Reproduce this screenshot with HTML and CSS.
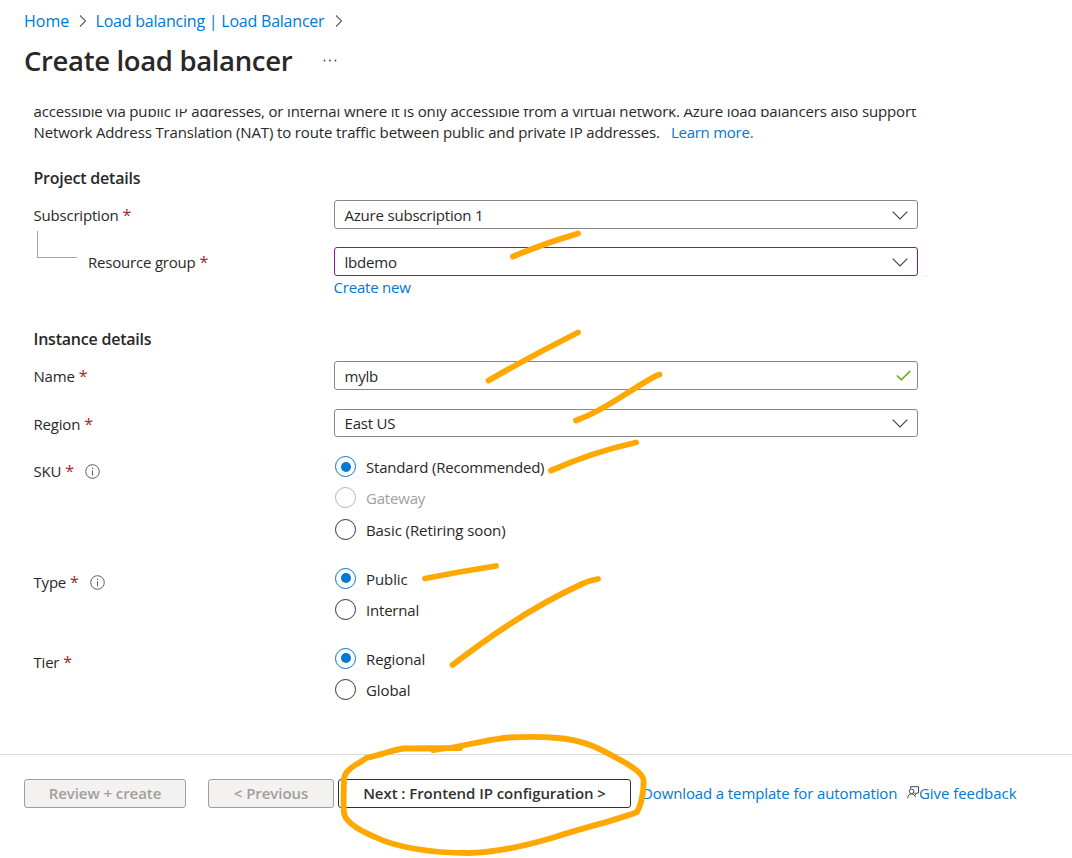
FILE: index.html
```html
<!DOCTYPE html>
<html lang="en">
<head>
<meta charset="utf-8">
<title>Create load balancer</title>
<link rel="stylesheet" href="styles.css">
</head>
<body>
<div class="page">
  <header class="header">
    <nav class="breadcrumb">
      <a class="link crumb-home">Home</a>
      <svg class="crumb-arrow" viewBox="0 0 8 14"><path d="M1 1.500 6.500 7 1 12.500"/></svg>
      <a class="link crumb-lb">Load balancing | Load Balancer</a>
      <svg class="crumb-arrow" viewBox="0 0 8 14"><path d="M1 1.500 6.500 7 1 12.500"/></svg>
    </nav>
    <div class="title-row">
      <h1 class="title">Create load balancer</h1>
      <svg class="more" viewBox="0 0 15 3"><circle cx="1.500" cy="1.500" r=".9"/><circle cx="7" cy="1.500" r=".9"/><circle cx="12.500" cy="1.500" r=".9"/></svg>
    </div>
  </header>

  <main class="content">
    <div class="intro">
      <p class="intro-line">accessible via public IP addresses, or internal where it is only accessible from a virtual network. Azure load balancers also support</p>
      <p class="intro-line"><span>Network Address Translation (NAT) to route traffic between public and private IP addresses.</span><a class="link learn">Learn more.</a></p>
    </div>

    <h2 class="section">Project details</h2>
    <div class="row">
      <div class="label"><span>Subscription</span><i class="req">*</i></div>
      <div class="field"><span>Azure subscription 1</span><svg class="chev" viewBox="0 0 16 9"><path d="M.7.700 8 8 15.300.700"/></svg></div>
    </div>
    <div class="row row-group">
      <div class="label"><span class="elbow"></span><span>Resource group</span><i class="req">*</i></div>
      <div class="field edited"><span>lbdemo</span><svg class="chev" viewBox="0 0 16 9"><path d="M.7.700 8 8 15.300.700"/></svg></div>
    </div>
    <a class="link create-new">Create new</a>

    <h2 class="section section-instance">Instance details</h2>
    <div class="row">
      <div class="label"><span>Name</span><i class="req">*</i></div>
      <div class="field"><span>mylb</span><svg class="tick" viewBox="0 0 15 11"><path d="M.8 5.500 5.300 9.800 14.200.900"/></svg></div>
    </div>
    <div class="row row-region">
      <div class="label"><span>Region</span><i class="req">*</i></div>
      <div class="field"><span>East US</span><svg class="chev" viewBox="0 0 16 9"><path d="M.7.700 8 8 15.300.700"/></svg></div>
    </div>
    <div class="row row-sku">
      <div class="label"><span>SKU</span><i class="req">*</i><svg class="info" viewBox="0 0 15 15"><circle cx="7.500" cy="7.500" r="6.800"/><path d="M7.500 6.300v5M7.500 3.700v1.300"/></svg></div>
      <div class="radios">
        <div class="radio on"><span class="dot"></span><span>Standard (Recommended)</span></div>
        <div class="radio off"><span class="dot"></span><span>Gateway</span></div>
        <div class="radio"><span class="dot"></span><span class="wider">Basic (Retiring soon)</span></div>
      </div>
    </div>
    <div class="row row-type">
      <div class="label"><span>Type</span><i class="req">*</i><svg class="info" viewBox="0 0 15 15"><circle cx="7.500" cy="7.500" r="6.800"/><path d="M7.500 6.300v5M7.500 3.700v1.300"/></svg></div>
      <div class="radios">
        <div class="radio on"><span class="dot"></span><span class="wider">Public</span></div>
        <div class="radio"><span class="dot"></span><span>Internal</span></div>
      </div>
    </div>
    <div class="row row-tier">
      <div class="label"><span>Tier</span><i class="req">*</i></div>
      <div class="radios">
        <div class="radio on"><span class="dot"></span><span class="wider">Regional</span></div>
        <div class="radio"><span class="dot"></span><span class="wider">Global</span></div>
      </div>
    </div>
  </main>

  <footer class="footer">
    <button class="btn btn-review" disabled>Review + create</button>
    <button class="btn btn-prev" disabled>&lt; Previous</button>
    <button class="btn btn-next">Next : Frontend IP configuration &gt;</button>
    <a class="link download">Download a template for automation</a>
    <svg class="fb-icon" viewBox="0 0 12 13"><path d="M3.500 2.500V.700h8v6.200H10L8.200 8.700V6.900H7.600"/><circle cx="4.600" cy="5.300" r="2.300"/><path d="M.6 12.300C.8 9.500 2.500 7.900 4.600 7.900s3.500 1.400 3.800 3.400"/></svg>
    <a class="link feedback">Give feedback</a>
  </footer>

  <svg class="marks" viewBox="0 0 1072 858">
    <path d="M513 256.500Q545 243 578 233.500"/>
    <path d="M488.500 380.500Q533 355 578 332.500"/>
    <path d="M576 420.500C604 410 624 394 652 378Q656 375.500 659.500 374.500"/>
    <path d="M551 470.500Q593 452 636 442.500"/>
    <path d="M425 578.500Q460 571.500 496 566"/>
    <path d="M452.500 665C495 632 540 603 582 584Q591 580 598 579"/>
    <path d="M433 750Q450 748.500 470 744C490 740 500 738 510 737.500Q534 736 558 738C592 741 608 754 624 762Q643 773 643.500 780C644 792 641 805 637 812C618 820 585 827 552 838Q500 853 468 853C430 853 395 847 375 837Q346 825 344 813C343 798 344 790 344 780C344 768 360 764 366 758C382 755 391 750 404 748.500Q430 748 460 748"/>
  </svg>
</div>
</body>
</html>
```
FILE: styles.css
```css
* { box-sizing: border-box; }
body {
  margin: 0;
  background: #fff;
  color: #292827;
  font: 15px/21px "Open Sans", "Noto Sans", sans-serif;
  letter-spacing: -0.2px;
}
.page {
  position: relative;
  display: flex;
  flex-direction: column;
  width: 1072px;
  height: 858px;
  overflow: hidden;
}
span, a, p, h1, h2, button { white-space: nowrap; }
.link { color: #0078d4; }
svg { flex: none; fill: none; }

.header { height: 109px; padding: 10px 24px 0; }
.breadcrumb { display: flex; align-items: center; height: 22px; font-size: 16px; }
.crumb-home { width: 45.5px; letter-spacing: 0; }
.crumb-lb { width: 230px; letter-spacing: -0.22px; }
.crumb-arrow { width: 8px; height: 14px; margin: 0 9px; stroke: #605e5c; stroke-width: 1.1; }
.title-row { display: flex; align-items: center; height: 38px; margin-top: 9px; }
.title { width: 299px; margin: 1px 0 0; font-size: 27.5px; line-height: 38px; font-weight: 600; letter-spacing: -0.35px; }
.more { width: 15px; height: 3px; fill: #444; }

.content { flex: none; height: 645px; padding-left: 33.5px; overflow: hidden; }
.intro { margin-top: -8px; letter-spacing: -0.145px; }
.intro-line { display: flex; height: 21px; margin: 0; }
.learn { margin-left: 11px; letter-spacing: -0.25px; }
.section { margin: 25px 0 0; font-size: 16px; line-height: 21px; font-weight: 600; letter-spacing: -0.22px; }
.section-instance { margin-top: 31px; }
.row { display: grid; grid-template-columns: 300.5px 584px; align-items: start; margin-top: 11px; }
.row-group { margin-top: 18px; }
.row-region { margin-top: 19px; }
.row-region .field { height: 28px; }
.label { display: flex; align-items: center; height: 29px; padding-top: 1px; }
.req { margin-left: 4px; color: #a4262c; font-style: normal; font-size: 16px; letter-spacing: 0; }
.elbow { width: 40px; height: 27px; margin: -35px 11px 0 3.5px; border: solid #a6a6a6; border-width: 0 0 1px 1px; }
.info { width: 15px; height: 15px; margin-left: 11px; stroke: #605e5c; stroke-width: 1; }
.field { display: flex; align-items: center; justify-content: space-between; height: 29px; padding: 1px 9px 0 9.5px; border: 1px solid #8a8886; border-radius: 3px; }
.edited { border-color: #881798; }
.chev { width: 16px; height: 9px; stroke: #444; stroke-width: 1.2; }
.tick { width: 15px; height: 11px; margin: -2px -3px 0 0; stroke: #57a300; stroke-width: 1.4; }
.create-new { display: block; margin: 1px 0 0 300px; }

.radios { display: grid; gap: 10.3px; padding-left: 1px; align-content: start; }
.radio { display: flex; align-items: center; gap: 10px; height: 21px; }
.radio span:last-child { margin-top: 2px; }
.wider { letter-spacing: -0.08px; }
.dot { display: grid; place-items: center; width: 21px; height: 21px; border: 1px solid #323130; border-radius: 50%; }
.on .dot { border-color: #0078d4; }
.on .dot::after { content: ""; width: 10px; height: 10px; border-radius: 50%; background: #0078d4; }
.off { color: #a19f9d; }
.off .dot { border-color: #b5b3b1; }
.row-sku { margin-top: 18px; }
.row-type { margin-top: 28px; }
.row-tier { margin-top: 28px; }

.footer { display: flex; align-items: flex-start; height: 104px; padding: 24px 24px 0; border-top: 1px solid #d9d9d9; }
.btn { height: 29px; padding: 0; border: 1px solid #323130; border-radius: 3px; background: #fff; color: #323130; font: 600 15px/21px "Open Sans", "Noto Sans", sans-serif; letter-spacing: -0.06px; }
.btn:disabled { border-color: #a19f9d; background: #f3f2f1; color: #a19f9d; }
.btn-review { width: 162px; }
.btn-prev { width: 126px; margin-left: 22px; }
.btn-next { width: 293px; margin-left: 4px; }
.download { width: 255px; margin: 4px 0 0 11px; letter-spacing: -0.12px; }
.fb-icon { width: 12px; height: 13px; margin: 7px 0 0 10px; stroke: #444; stroke-width: 1; }
.feedback { margin-top: 4px; letter-spacing: -0.05px; }

.marks { position: absolute; inset: 0; width: 1072px; height: 858px; stroke: #ffa800; stroke-width: 5.8; stroke-linecap: round; stroke-linejoin: round; pointer-events: none; }
```
